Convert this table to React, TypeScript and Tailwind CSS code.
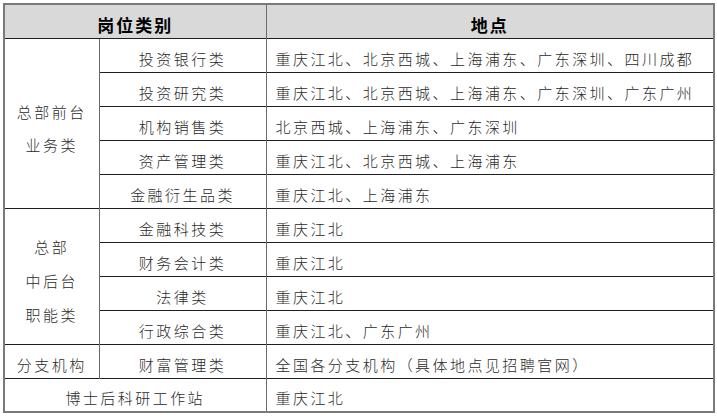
import React from "react";

const font = { fontFamily: '"Noto Sans CJK SC", "Noto Sans", sans-serif' };

type Row = { sub: string; loc: string };

const group1: Row[] = [
  { sub: "投资银行类", loc: "重庆江北、北京西城、上海浦东、广东深圳、四川成都" },
  { sub: "投资研究类", loc: "重庆江北、北京西城、上海浦东、广东深圳、广东广州" },
  { sub: "机构销售类", loc: "北京西城、上海浦东、广东深圳" },
  { sub: "资产管理类", loc: "重庆江北、北京西城、上海浦东" },
  { sub: "金融衍生品类", loc: "重庆江北、上海浦东" },
];

const group2: Row[] = [
  { sub: "金融科技类", loc: "重庆江北" },
  { sub: "财务会计类", loc: "重庆江北" },
  { sub: "法律类", loc: "重庆江北" },
  { sub: "行政综合类", loc: "重庆江北、广东广州" },
];

const cell =
  "h-[34px] border-t border-t-[#1f1f1f] border-l border-l-[#6b6b6b] align-middle pt-[7px] pb-0 text-[15px] tracking-[2.45px] text-[#2a2a2a] font-light leading-[20px]";

export default function App() {
  return (
    <div className="w-[717px] h-[418px] bg-white pt-[3px] pl-[3px]" style={font}>
      <table className="table-fixed border-collapse w-[710px] border-2 border-[#7a7a7a]">
        <colgroup>
          <col className="w-[95px]" />
          <col className="w-[167px]" />
          <col className="w-[448px]" />
        </colgroup>
        <tbody>
          <tr className="bg-[#d9d9d9]">
            <td
              colSpan={2}
              className="h-[34px] text-center align-middle pt-[7px] text-[17px] font-bold tracking-[2px] text-black leading-[20px]"
            >
              岗位类别
            </td>
            <td className="h-[34px] text-center align-middle pt-[7px] text-[17px] font-bold tracking-[2px] text-black leading-[20px] border-l border-l-[#6b6b6b]">
              地点
            </td>
          </tr>
          {group1.map((r, i) => (
            <tr key={r.sub}>
              {i === 0 && (
                <td
                  rowSpan={5}
                  className="border-t border-t-[#1f1f1f] align-middle text-center pt-[10px] text-[15px] tracking-[2.45px] text-[#2a2a2a] font-light leading-[33px]"
                >
                  总部前台
                  <br />
                  业务类
                </td>
              )}
              <td className={cell + " text-center"}>{r.sub}</td>
              <td className={cell + " pl-[9px] whitespace-nowrap"}>{r.loc}</td>
            </tr>
          ))}
          {group2.map((r, i) => (
            <tr key={r.sub}>
              {i === 0 && (
                <td
                  rowSpan={4}
                  className="border-t border-t-[#1f1f1f] align-middle text-center pt-[10px] text-[15px] tracking-[2.45px] text-[#2a2a2a] font-light leading-[34px]"
                >
                  总部
                  <br />
                  中后台
                  <br />
                  职能类
                </td>
              )}
              <td className={cell + " text-center"}>{r.sub}</td>
              <td className={cell + " pl-[9px] whitespace-nowrap"}>{r.loc}</td>
            </tr>
          ))}
          <tr>
            <td className="h-[34px] border-t border-t-[#1f1f1f] align-middle pt-[7px] text-center text-[15px] tracking-[2.45px] text-[#2a2a2a] font-light leading-[20px]">
              分支机构
            </td>
            <td className={cell + " text-center"}>财富管理类</td>
            <td className={cell + " pl-[9px] whitespace-nowrap"}>全国各分支机构（具体地点见招聘官网）</td>
          </tr>
          <tr>
            <td
              colSpan={2}
              className="h-[34px] border-t border-t-[#1f1f1f] align-middle pt-[7px] text-center text-[15px] tracking-[2.45px] text-[#2a2a2a] font-light leading-[20px]"
            >
              博士后科研工作站
            </td>
            <td className={cell + " pl-[9px] whitespace-nowrap"}>重庆江北</td>
          </tr>
        </tbody>
      </table>
    </div>
  );
}
